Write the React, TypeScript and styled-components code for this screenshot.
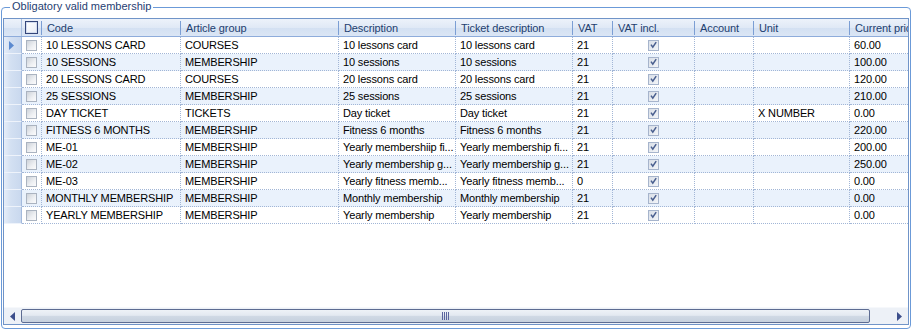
import styled, { createGlobalStyle } from "styled-components";

const GlobalStyle = createGlobalStyle`
  html, body {
    margin: 0;
    padding: 0;
    background: #ffffff;
  }
  body {
    font-family: "Liberation Sans", Arial, sans-serif;
    font-size: 11px;
  }
`;

// column widths, each one includes its own right border
const COLUMNS = "18px 20px 139px 158px 117px 117px 40px 82px 59px 96px 100px";

const headers = [
  "Code",
  "Article group",
  "Description",
  "Ticket description",
  "VAT",
  "VAT incl.",
  "Account",
  "Unit",
  "Current price",
];

type Product = {
  code: string;
  group: string;
  description: string;
  ticket: string;
  vat: string;
  unit?: string;
  price: string;
};

const products: Product[] = [
  { code: "10 LESSONS CARD", group: "COURSES", description: "10 lessons card", ticket: "10 lessons card", vat: "21", price: "60.00" },
  { code: "10 SESSIONS", group: "MEMBERSHIP", description: "10 sessions", ticket: "10 sessions", vat: "21", price: "100.00" },
  { code: "20 LESSONS CARD", group: "COURSES", description: "20 lessons card", ticket: "20 lessons card", vat: "21", price: "120.00" },
  { code: "25 SESSIONS", group: "MEMBERSHIP", description: "25 sessions", ticket: "25 sessions", vat: "21", price: "210.00" },
  { code: "DAY TICKET", group: "TICKETS", description: "Day ticket", ticket: "Day ticket", vat: "21", unit: "X NUMBER", price: "0.00" },
  { code: "FITNESS 6 MONTHS", group: "MEMBERSHIP", description: "Fitness 6 months", ticket: "Fitness 6 months", vat: "21", price: "220.00" },
  { code: "ME-01", group: "MEMBERSHIP", description: "Yearly membershiip fi...", ticket: "Yearly membership fi...", vat: "21", price: "200.00" },
  { code: "ME-02", group: "MEMBERSHIP", description: "Yearly membership g...", ticket: "Yearly membership g...", vat: "21", price: "250.00" },
  { code: "ME-03", group: "MEMBERSHIP", description: "Yearly fitness memb...", ticket: "Yearly fitness memb...", vat: "0", price: "0.00" },
  { code: "MONTHLY MEMBERSHIP", group: "MEMBERSHIP", description: "Monthly membership", ticket: "Monthly membership", vat: "21", price: "0.00" },
  { code: "YEARLY MEMBERSHIP", group: "MEMBERSHIP", description: "Yearly membership", ticket: "Yearly membership", vat: "21", price: "0.00" },
];

function CurrentArrow() {
  return (
    <svg width="5" height="9" viewBox="0 0 5 9">
      <path d="M0 0 L5 4.5 L0 9 Z" fill="#5b8ad0" />
    </svg>
  );
}

function CheckMark() {
  return (
    <svg width="10" height="10" viewBox="0 0 10 10">
      <path d="M2.2 4.6 L4.2 7.4 L8 1.8" fill="none" stroke="#4a5f8f" strokeWidth="1.7" />
    </svg>
  );
}

function ScrollArrow({ dir }: { dir: "left" | "right" }) {
  return (
    <svg width="5" height="9" viewBox="0 0 5 9">
      {dir === "left" ? (
        <path d="M5 0 L0 4.5 L5 9 Z" fill="#3d4f8c" />
      ) : (
        <path d="M0 0 L5 4.5 L0 9 Z" fill="#3d4f8c" />
      )}
    </svg>
  );
}

function App() {
  return (
    <>
      <GlobalStyle />
      <S.GroupBox>
        <S.Legend>Obligatory valid membership</S.Legend>
        <S.Grid>
          <S.HeaderRow>
            <S.CornerCell />
            <S.HeaderCell $center>
              <S.HeaderCheck />
            </S.HeaderCell>
            {headers.map((h) => (
              <S.HeaderCell key={h}>{h}</S.HeaderCell>
            ))}
          </S.HeaderRow>

          <S.Body>
            {products.map((p, i) => (
              <S.Row key={p.code} $alt={i % 2 === 1}>
                <S.RowHeader>{i === 0 && <CurrentArrow />}</S.RowHeader>
                <S.Cell $center>
                  <S.CheckBox />
                </S.Cell>
                <S.Cell>{p.code}</S.Cell>
                <S.Cell>{p.group}</S.Cell>
                <S.Cell>{p.description}</S.Cell>
                <S.Cell>{p.ticket}</S.Cell>
                <S.Cell>{p.vat}</S.Cell>
                <S.Cell $center>
                  <S.CheckBox $checked>
                    <CheckMark />
                  </S.CheckBox>
                </S.Cell>
                <S.Cell />
                <S.Cell>{p.unit}</S.Cell>
                <S.Cell>{p.price}</S.Cell>
              </S.Row>
            ))}
          </S.Body>

          <S.HScroll>
            <S.ScrollButton>
              <ScrollArrow dir="left" />
            </S.ScrollButton>
            <S.Track>
              <S.Thumb>
                <S.Grip>
                  <span />
                  <span />
                  <span />
                  <span />
                </S.Grip>
              </S.Thumb>
            </S.Track>
            <S.ScrollButton>
              <ScrollArrow dir="right" />
            </S.ScrollButton>
          </S.HScroll>
        </S.Grid>
      </S.GroupBox>
    </>
  );
}

const S = {
  GroupBox: styled.fieldset`
    box-sizing: border-box;
    width: 910px;
    height: 329px;
    margin: 0 0 0 1px;
    padding: 4px 1px 3px 1px;
    min-width: 0;
    border: 1px solid #6b9ad8;
    border-radius: 4px;
  `,
  Legend: styled.legend`
    margin-left: 7px;
    padding: 0 2px;
    height: 14px;
    line-height: 13px;
    font-size: 11px;
    color: #1f3e72;
  `,
  Grid: styled.div`
    box-sizing: border-box;
    height: 307px;
    display: flex;
    flex-direction: column;
    border: 1px solid #7094c8;
    background: #ffffff;
    overflow: hidden;
  `,
  HeaderRow: styled.div`
    display: grid;
    grid-template-columns: ${COLUMNS};
    height: 18px;
    box-sizing: border-box;
    border-bottom: 1px solid #8eacdb;
    background: linear-gradient(
      to bottom,
      #edf2fa 0%,
      #e0e9f6 50%,
      #d3e0f2 52%,
      #dbe6f5 100%
    );
  `,
  CornerCell: styled.div`
    border-right: 1px solid #a9bfe0;
  `,
  HeaderCell: styled.div<{ $center?: boolean }>`
    display: flex;
    align-items: center;
    justify-content: ${(p) => (p.$center ? "center" : "flex-start")};
    padding-left: ${(p) => (p.$center ? "0" : "5px")};
    overflow: hidden;
    white-space: nowrap;
    color: #22406f;
    letter-spacing: -0.1px;
    background: linear-gradient(#7b9ed4, #7b9ed4) right center / 1px 14px
      no-repeat;
  `,
  HeaderCheck: styled.div`
    box-sizing: border-box;
    width: 13px;
    height: 13px;
    margin-left: -1px;
    border: 1px solid #34467a;
    background: linear-gradient(135deg, #ffffff 0%, #e7ecf5 100%);
    box-shadow: inset 0 0 0 1px #d5deef;
  `,
  Body: styled.div`
    flex: 1;
    overflow: hidden;
  `,
  Row: styled.div<{ $alt: boolean }>`
    display: grid;
    grid-template-columns: ${COLUMNS};
    height: 17px;
    background: ${(p) => (p.$alt ? "#eaf2fc" : "#ffffff")};
  `,
  RowHeader: styled.div`
    display: flex;
    align-items: center;
    padding-left: 5px;
    box-sizing: border-box;
    border-right: 1px solid #a3badd;
    border-bottom: 1px solid #eef3fb;
    background: linear-gradient(to right, #e6edf8 0%, #d3e0f2 40%, #c9d8ee 100%);
  `,
  Cell: styled.div<{ $center?: boolean }>`
    display: flex;
    align-items: center;
    justify-content: ${(p) => (p.$center ? "center" : "flex-start")};
    box-sizing: border-box;
    padding-left: ${(p) => (p.$center ? "0" : "4px")};
    border-right: 1px dotted #a2b6d6;
    border-bottom: 1px dotted #a2b6d6;
    color: #000000;
    letter-spacing: -0.15px;
    white-space: nowrap;
    overflow: hidden;
  `,
  CheckBox: styled.div<{ $checked?: boolean }>`
    box-sizing: border-box;
    width: 11px;
    height: 11px;
    display: flex;
    align-items: center;
    justify-content: center;
    border: 1px solid ${(p) => (p.$checked ? "#a6b4cc" : "#aab3c0")};
    background: ${(p) =>
      p.$checked
        ? "linear-gradient(135deg, #d9dfe8 0%, #f3f5f8 100%)"
        : "linear-gradient(135deg, #cdd2d9 0%, #eef0f3 60%, #fbfbfc 100%)"};
  `,
  HScroll: styled.div`
    display: flex;
    height: 17px;
    background: #edf1f7;
    border-top: 1px solid #f6f8fb;
    box-sizing: border-box;
  `,
  ScrollButton: styled.div`
    width: 17px;
    display: flex;
    align-items: center;
    justify-content: center;
  `,
  Track: styled.div`
    flex: 1;
    display: flex;
    align-items: center;
  `,
  Thumb: styled.div`
    box-sizing: border-box;
    width: 849px;
    height: 14px;
    display: flex;
    align-items: center;
    justify-content: center;
    border: 1px solid #5d6c92;
    border-radius: 2px;
    background: linear-gradient(
      to bottom,
      #eef2f7 0%,
      #e3e9f1 45%,
      #d0d9e5 50%,
      #c6d0de 100%
    );
  `,
  Grip: styled.div`
    display: flex;
    gap: 1px;
    height: 8px;

    span {
      width: 1px;
      background: #5a649e;
    }
  `,
};

export default App;
